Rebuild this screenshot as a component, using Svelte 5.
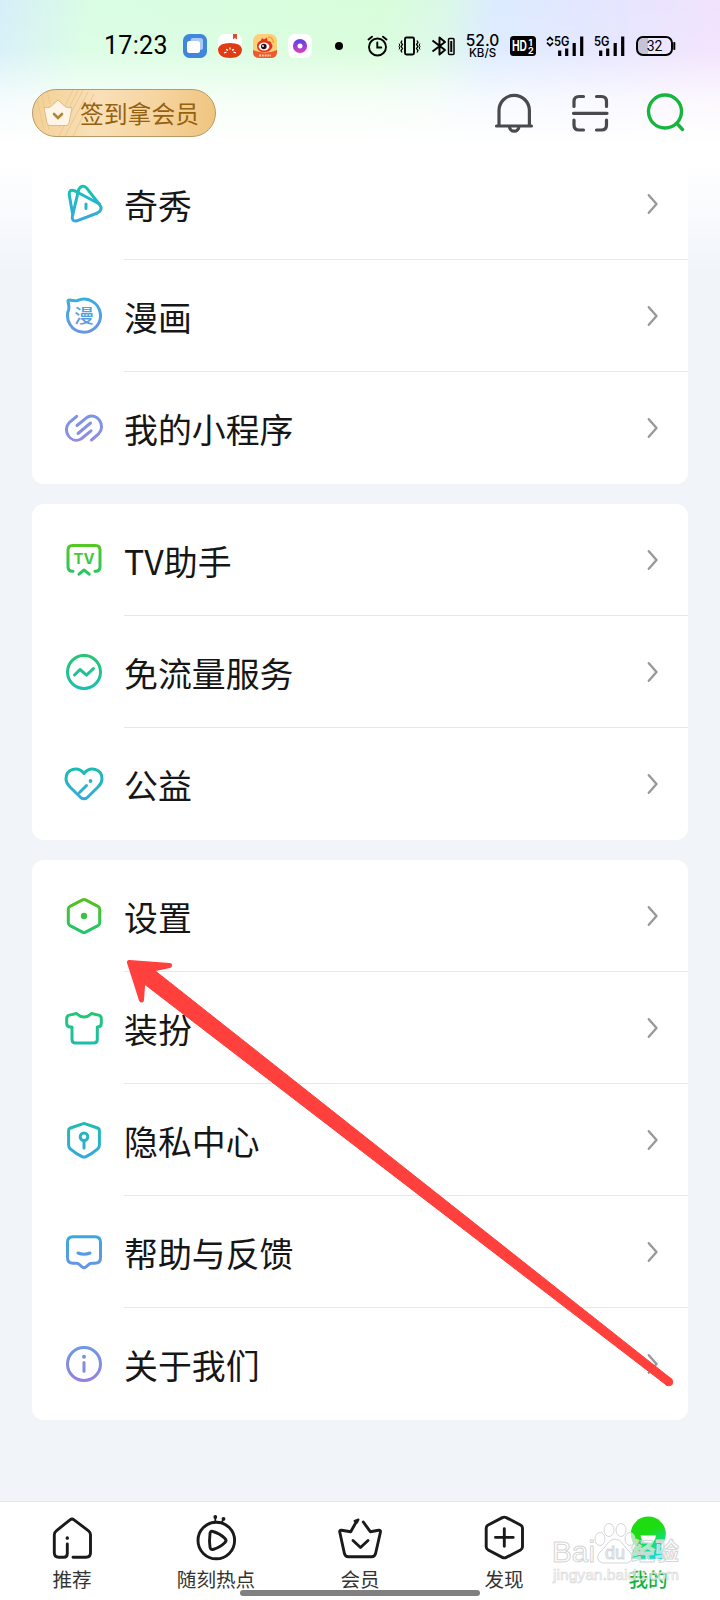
<script>
  const groups = [
    [
      { icon: 'show', label: '奇秀', from: '#14c3b2', to: '#3aa6e2' },
      { icon: 'comic', label: '漫画', from: '#38aede', to: '#6c93e6' },
      { icon: 'mini', label: '我的小程序', from: '#7496e6', to: '#978be0' }
    ],
    [
      { icon: 'tv', label: 'TV助手', from: '#58c81c', to: '#22c56c' },
      { icon: 'traffic', label: '免流量服务', from: '#26c670', to: '#1bbfb4' },
      { icon: 'heart', label: '公益', from: '#1bbdae', to: '#35a9e2' }
    ],
    [
      { icon: 'settings', label: '设置', from: '#58c01c', to: '#1fc670' },
      { icon: 'shirt', label: '装扮', from: '#26c66c', to: '#18bfae' },
      { icon: 'shield', label: '隐私中心', from: '#1ebcae', to: '#34a8e0' },
      { icon: 'help', label: '帮助与反馈', from: '#36a8e0', to: '#6c93e6' },
      { icon: 'about', label: '关于我们', from: '#6c98e4', to: '#9482e0' }
    ]
  ];

  const tabs = [
    { id: 'home', label: '推荐' },
    { id: 'hot', label: '随刻热点' },
    { id: 'vip', label: '会员' },
    { id: 'discover', label: '发现' },
    { id: 'mine', label: '我的' }
  ];

  let activeTab = $state('mine');
</script>

<div class="screen">
  <div class="status-bar">
    <span class="clock">17:23</span>
    <div class="app-icons">
      <svg width="24" height="24" viewBox="0 0 24 24">
        <rect width="24" height="24" rx="6.5" fill="#3f86dc" />
        <rect x="7.5" y="4" width="12.5" height="12" rx="2.5" fill="#a9cbf5" />
        <rect x="4" y="7" width="13" height="12" rx="2.5" fill="#fff" />
      </svg>
      <svg width="24" height="24" viewBox="0 0 24 24">
        <rect width="24" height="24" rx="6.5" fill="#fff" />
        <path d="M15 0h4v5.500l-2-1.500-2 1.500z" fill="#d9502f" />
        <path d="M0 15Q1 9 12 9t12 6q0 9-12 9T0 15z" fill="#df3c14" />
        <path d="M6 19l2.500-.8M8 15.300l2 1M12 13.500v2M16 15.300l-2 1M18 19l-2.500-.8" stroke="#fff" stroke-width="1.300" />
      </svg>
      <svg width="24" height="24" viewBox="0 0 24 24">
        <rect width="24" height="24" rx="6.500" fill="#fbd078" />
        <path d="M0 16q12 5 24 0v2q0 6-6.500 6h-11Q0 24 0 18z" fill="#ee5a2e" />
        <path d="M4 12q0-4 4-5.500l1-2.500 2 1.500 3-2 .5 3.500q4 0 4 3 2 2 0 4.500-2 3.500-7 3.500-7.500 0-7.500-6z" fill="#e2321c" />
        <ellipse cx="11" cy="12.500" rx="5.300" ry="4" fill="#fff" />
        <circle cx="10.800" cy="12.500" r="2.800" fill="#1a1212" />
        <circle cx="10" cy="12" r=".9" fill="#fff" />
        <path d="M15 3q5 0 5.500 6" fill="none" stroke="#f3a13a" stroke-width="1.400" />
        <path d="M6 21.500h12" stroke="#fbc9a0" stroke-width="2" stroke-dasharray="2 .8" />
      </svg>
      <svg width="24" height="24" viewBox="0 0 24 24">
        <defs>
          <linearGradient id="ring" x1="0" y1="0" x2="0" y2="1">
            <stop offset="0" stop-color="#6a3ee8" />
            <stop offset="1" stop-color="#c940c0" />
          </linearGradient>
        </defs>
        <rect width="24" height="24" rx="6.500" fill="#fff" />
        <circle cx="12" cy="12" r="4.800" fill="none" stroke="url(#ring)" stroke-width="4.600" />
      </svg>
    </div>
    <i class="more-dot"></i>
    <div class="signals">
      <svg width="21" height="22" viewBox="0 0 21 22" fill="none" stroke="#000" stroke-width="1.900" stroke-linecap="round">
        <circle cx="10.500" cy="12" r="8.500" />
        <path d="M10.300 7.500v5h4M1.500 4.500L5 1.700M19.500 4.500L16 1.700" />
      </svg>
      <svg width="23" height="22" viewBox="0 0 23 22" fill="none" stroke="#000" stroke-width="1.900">
        <rect x="7" y="2.500" width="9" height="17" rx="1.500" />
        <path d="M4 5.500L3 7.500l1.500 2L3 11.500l1.500 2L3 15.500l1 2M19 5.500l1 2-1.500 2 1.500 2-1.500 2 1.500 2-1 2" stroke-width="1.300" />
        <path d="M1 8.500l.8 1.500L1 11.500 1.800 13 1 14.500M22 8.500l-.8 1.500.8 1.500-.8 1.500.8 1.500" stroke-width="1" />
      </svg>
      <svg width="24" height="22" viewBox="0 0 24 22" fill="none" stroke="#000" stroke-width="2">
        <path d="M1.500 5.500L14 15l-5.500 4.500v-17L14 7 1.500 16.500" stroke-linejoin="round" />
        <rect x="17.500" y="3.500" width="5.500" height="16" rx="1" stroke-width="1.500" />
        <path d="M20.250 6v11" stroke-width="2" />
      </svg>
      <div class="speed"><span>52.0</span><small>KB/S</small></div>
      <svg width="26" height="20" viewBox="0 0 26 20">
        <rect width="26" height="20" rx="3.500" />
        <text x="2" y="15" class="hd" textLength="15" lengthAdjust="spacingAndGlyphs">HD</text>
        <text x="18.500" y="9.800" class="hd-num">1</text>
        <text x="18" y="18" class="hd-num">2</text>
      </svg>
      <svg width="38" height="28" viewBox="0 -3 38 28">
        <path d="M1 5.300L4 2.400 7 5.300M1 7.700L4 10.600 7 7.700" fill="none" stroke="#000" stroke-width="1.800" />
        <text x="8" y="10.800" class="net" textLength="15.500" lengthAdjust="spacingAndGlyphs">5G</text>
        <path d="M13.700 15.500V21M20.700 13.500V21M28.200 8V21M35.700 1.500V21" stroke="#000" stroke-width="3.200" />
      </svg>
      <svg width="31" height="28" viewBox="0 -3 31 28">
        <text x="0" y="10.800" class="net" textLength="15.500" lengthAdjust="spacingAndGlyphs">5G</text>
        <path d="M6.700 15.500V21M13.700 13.500V21M21.200 8V21M28.700 1.500V21" stroke="#000" stroke-width="3.200" />
      </svg>
      <svg width="41" height="22" viewBox="0 0 41 22">
        <path d="M8 2h5v18H8q-6 0-6-6V8q0-6 6-6z" fill="#c5c3d6" />
        <rect x="2" y="2" width="35" height="18" rx="6" fill="none" stroke="#000" stroke-width="2" />
        <rect x="38.300" y="7" width="2" height="8" rx=".8" />
        <text x="19.500" y="16" class="battery" text-anchor="middle">32</text>
      </svg>
    </div>
  </div>

  <header class="top-bar">
    <button class="check-in">
      <svg class="rays" width="80" height="46" viewBox="0 0 80 46" fill="none" stroke="#ecc88e" stroke-width="1">
        <path d="M3 4l8 36M8 0l8 40M14 0l3 14M40 0L28 24M45 0L26 38M50 0L26 46M55 2L32 46M61 4L40 46" />
      </svg>
      <svg class="crown" width="30" height="28" viewBox="0 0 30 28">
        <path d="M1 8.500q6 1 8.500-2.500Q12 4 15 1q3 3 5.500 5Q23 9.500 29 8.500l-3 15.500q-.4 2.500-3 2.500H7q-2.600 0-3-2.500z" fill="#fdf5e8" stroke="#dfbd85" stroke-width="1" />
        <path d="M11 15l4 4 4-4" fill="none" stroke="#b38435" stroke-width="2.600" stroke-linecap="round" />
      </svg>
      <span>签到拿会员</span>
    </button>
    <div class="actions">
      <svg width="40" height="40" viewBox="0 0 40 40" fill="none" stroke="#4a4a4c" stroke-width="3.200" stroke-linecap="round">
        <path d="M5 32V17.500a15.200 15.200 0 0 1 30.400 0V32M2.500 33h35" />
        <path d="M15.500 33.500a4.700 4.700 0 0 0 9.400 0" />
      </svg>
      <svg width="40" height="40" viewBox="0 0 40 40" fill="none" stroke="#4a4a4c" stroke-width="3.200" stroke-linecap="round">
        <path d="M4 13.500V8.500q0-5 5-5h4.500M26.500 3.500h5q5 0 5 5v5M4 27v5q0 5 5 5h4.500M26.500 37h5q5 0 5-5v-5M3.500 20.300h33.500" />
      </svg>
      <svg width="40" height="40" viewBox="0 0 40 40" fill="none" stroke="#16b53e" stroke-width="3.400" stroke-linecap="round">
        <circle cx="19" cy="18.500" r="16.500" />
        <path d="M31 30.500l5.500 6" />
      </svg>
    </div>
  </header>

  <main>
    {#each groups as group}
      <section class="card">
        {#each group as item}
          <div class="row">
            <svg class="row-icon" width="40" height="40" viewBox="0 0 40 40" style:--tint="url(#g-{item.icon})">
              <defs>
                <linearGradient id="g-{item.icon}" gradientUnits="userSpaceOnUse" x1="0" y1="2" x2="0" y2="38">
                  <stop offset="0" stop-color={item.from} />
                  <stop offset="1" stop-color={item.to} />
                </linearGradient>
              </defs>
              {#if item.icon === 'show'}
                <path d="M14.800 5.200L8.300 32.500Q7.600 37.800 12.800 36.800L33.500 29Q39.500 25.500 35.500 20.500L22.500 3.800Q18 .2 14.800 5.200z" />
                <path d="M8.800 31L5.200 10.500Q5 4.500 11 7L35.500 20M22 20v4.500" />
              {:else if item.icon === 'comic'}
                <path d="M13.500 4.500A16.500 16.500 0 1 1 4.500 14Q5.500 11 4 5.500 3.800 4 5.500 4q4.500 1 8 .5z" />
                <text x="10.300" y="27" class="comic">漫</text>
              {:else if item.icon === 'mini'}
                <path d="M12.700 8.300L5.500 14.300C-2.500 22.500 6.500 36.500 17 31L27 22.800M27.500 32l7-6C42.500 18 33.500 4 23 9.300L13 17.500" />
                <path d="M14 25.500L26.500 15" />
              {:else if item.icon === 'tv'}
                <path d="M9 31.200H8.500q-4.500 0-4.500-4.500V10q0-4.500 4.500-4.500h23q4.500 0 4.500 4.500v16.700q0 4.500-4.500 4.500H31M15 34.200l5-4.200 5.200 4.200" />
                <text x="9.500" y="24" class="tv" textLength="21" lengthAdjust="spacingAndGlyphs">TV</text>
              {:else if item.icon === 'traffic'}
                <circle cx="20" cy="20" r="16.500" />
                <path d="M10.500 23l5.500-5.500 6.500 5.700 7-6.700" />
              {:else if item.icon === 'heart'}
                <path d="M20 9.500C14 2 2 4.500 2 15q0 4 4 8l10.500 10.300q3.500 3 7 0L34 23q4-4 4-8C38 4.500 26 2 20 9.500zM15.500 28.500l7-7" />
                <circle class="solid" cx="26.500" cy="17" r="1.900" />
              {:else if item.icon === 'settings'}
                <path d="M18.500 3.900L6 10.300q-1.700.9-1.700 2.700v14q0 1.800 1.700 2.700l12.500 6.400q1.500.8 3 0L34 29.700q1.700-.9 1.700-2.700V13q0-1.800-1.700-2.700L21.500 3.900q-1.500-.8-3 0z" />
                <circle class="solid" cx="20" cy="20" r="3.200" />
              {:else if item.icon === 'shirt'}
                <path d="M12.500 5.500Q20 12.500 27.500 5.500l7 1.600q2.800.6 2.800 3.400v5q0 3.500-4 3.500v12.500q0 3.500-3.500 3.500H11.500Q8 35 8 31.500V19H6.500Q2.700 19 2.700 15.500v-5q0-2.800 2.800-3.400z" />
              {:else if item.icon === 'shield'}
                <path d="M18.600 3.800Q20 3.200 21.400 3.800L33.500 8q1.900.7 1.900 2.700V25q0 2.700-2 4.200Q28 34 21.500 36.800q-1.500.6-3 0Q12 34 6.600 29.200q-2-1.500-2-4.200V10.700q0-2 1.900-2.700z" />
                <circle cx="20" cy="16.700" r="3.800" />
                <path d="M20 20.500v7.500" />
              {:else if item.icon === 'help'}
                <path d="M9 4.800h22q5.500 0 5.500 5.500v15.500q0 5.500-5.500 5.500h-3.500q-1.700 0-3 1.300l-2.500 2.200q-2 1.600-4 0l-2.500-2.200q-1.300-1.300-3-1.300H9q-5.500 0-5.500-5.500V10.300Q3.500 4.800 9 4.800zM14 21q6 2.500 12 0" />
              {:else}
                <circle cx="20" cy="20" r="16.500" />
                <path d="M20 18.500v8.800" />
                <circle class="solid" cx="20" cy="12.800" r="2" />
              {/if}
            </svg>
            <div class="row-body">
              <span class="row-label">{item.label}</span>
              <svg class="chevron" width="12" height="22" viewBox="0 0 12 22">
                <path d="M1.800 2.200l7.700 8.800-7.700 8.800" />
              </svg>
            </div>
          </div>
        {/each}
      </section>
    {/each}
  </main>

  <nav class="tab-bar">
    {#each tabs as tab}
      <button class="tab" class:active={tab.id === activeTab} onclick={() => (activeTab = tab.id)}>
        <svg class="tab-icon" width="48" height="48" viewBox="0 0 48 48">
          {#if tab.id === 'home'}
            <path d="M19.300 30v9.500q0 3.800-3.500 3.800h-5q-4.500 0-4.500-4.500v-18q0-2.500 2-4L22 5.800q2-1.500 4 0l14.500 11q2 1.500 2 4v18q0 4.500-4.500 4.500H25" />
            <path d="M19.300 24v.2" stroke-width="3.300" />
          {:else if tab.id === 'hot'}
            <circle cx="24.300" cy="26.500" r="18.300" />
            <path d="M18 20q0-3.500 3-2.500Q28 19.500 33 24.500q2 2 0 4-5 5-12 7-2.500.5-3-2.500-1-6 0-13z" />
            <path class="antenna" d="M23.300 3v5M31.500 4.800l-2 4" />
            <path class="antenna-tip" d="M23.300 3v.1M31.500 4.800v.1" />
          {:else if tab.id === 'vip'}
            <path d="M20.500 7.500L14.700 17.700 5.500 16.200q-2.200-.2-1.700 2L8.300 39q.7 3.800 4.200 3.800h23q3.500 0 4.200-3.800l4.700-20.800q.5-2.200-1.700-2l-8.400 1.500L27.300 8" />
            <path d="M18.500 7l4-1.500-1.500 3z" stroke-width="2" />
            <path d="M17 26.500l7.500 7 7.500-7" />
          {:else if tab.id === 'discover'}
            <path d="M22.300 3.600L8.200 11Q6.200 12 6.200 14.200v18.500q0 2.200 2 3.300l14.100 7.400q2 1 4 0L40.500 36q2-1.100 2-3.300V14.200q0-2.200-2-3.200L26.300 3.600q-2-1-4 0zM15.500 23.400h17.700M24.300 14.700v17.500" />
          {:else}
            <defs>
              <linearGradient id="mine" gradientUnits="userSpaceOnUse" x1="18" y1="8" x2="36" y2="42">
                <stop offset=".3" stop-color="#1fdc12" />
                <stop offset="1" stop-color="#06dfe0" />
              </linearGradient>
            </defs>
            <circle class="face" cx="24.300" cy="20" r="17.500" />
            <path class="face" d="M10 33h28l3 12H6.700z" />
            <path class="cut" d="M16.500 21.500h15.500q-1 7.500-7.700 7.500t-7.800-7.500z" />
          {/if}
        </svg>
        <span>{tab.label}</span>
      </button>
    {/each}
  </nav>
  <div class="home-indicator"></div>

  <svg class="watermark" width="132" height="66" viewBox="0 0 132 66">
    <text x="1" y="42" class="wm-name" textLength="43" lengthAdjust="spacingAndGlyphs">Bai</text>
    <g class="paw">
      <ellipse cx="49" cy="19" rx="5" ry="6.500" />
      <ellipse cx="58" cy="10" rx="5" ry="6.500" />
      <ellipse cx="70" cy="10" rx="5" ry="6.500" />
      <ellipse cx="79" cy="19" rx="5" ry="6.500" />
      <path d="M64 19q-5 0-8 5t-7 8q-4 5-1 9 3 3 8 2h16q5 1 8-2 3-4-1-9-4-3-7-8t-8-5z" />
    </g>
    <text x="54" y="39" class="wm-du">du</text>
    <text x="80" y="40" class="wm-cn" textLength="48" lengthAdjust="spacingAndGlyphs">经验</text>
    <text x="2" y="60" class="wm-url" textLength="126" lengthAdjust="spacingAndGlyphs">jingyan.baidu.com</text>
  </svg>

  <svg class="pointer" width="552" height="434" viewBox="124 956 552 434">
    <path class="pointer-head" d="M129.500 962.500L169.500 965.500 148 970 150 976 143 979 141.500 1000z" />
    <path d="M144 966L156 971.500 671.500 1379 667 1385.500 143 983z" />
    <circle cx="669" cy="1382" r="3.800" />
  </svg>
</div>

<style>
  :global(body) {
    background: #f1f5fa;
  }

  .screen {
    position: relative;
    display: flex;
    flex-direction: column;
    width: 720px;
    height: 1600px;
    overflow: hidden;
    box-sizing: border-box;
    font-family: 'Noto Sans CJK SC', sans-serif;
    color: #161616;
    background:
      linear-gradient(180deg, rgba(255, 255, 255, 0) 0, rgba(255, 255, 255, 0.08) 50px, rgba(255, 255, 255, 0.75) 100px, #fff 145px, #fff 160px, #f1f5fa 275px, #f1f5fa 100%),
      linear-gradient(100deg, #d6eefa 0, #dafde4 90px, #d8fddb 380px, #dbf8e8 440px, #dcebff 490px, #e7e5ff 620px, #f7e1fb 760px);
  }

  button {
    padding: 0;
    border: 0;
    background: none;
    font-family: inherit;
    color: inherit;
  }

  svg {
    display: block;
    flex-shrink: 0;
  }

  .status-bar {
    display: flex;
    align-items: center;
    height: 89px;
    padding: 3px 44px 0 104px;
    box-sizing: border-box;
  }

  .clock {
    width: 79px;
    font-family: Roboto, sans-serif;
    font-size: 25px;
    line-height: 30px;
    letter-spacing: 0.3px;
    color: #000;
  }

  .app-icons {
    display: flex;
    gap: 11px;
  }

  .more-dot {
    width: 8px;
    height: 8px;
    margin: 0 24px 0 23px;
    border-radius: 50%;
    background: #000;
  }

  .signals {
    display: flex;
    align-items: center;
    gap: 10px;
  }

  .speed {
    display: flex;
    flex-direction: column;
    align-items: center;
    width: 35px;
    font: 500 15.5px/13px Inter, sans-serif;
    color: #000;
  }

  .speed small {
    font-size: 11.5px;
    line-height: 12px;
  }

  .hd {
    font: 700 14px Inter, sans-serif;
    fill: #fff;
  }

  .hd-num {
    font: 700 9px Inter, sans-serif;
    fill: #fff;
  }

  .net {
    font: 600 13px Inter, sans-serif;
  }

  .battery {
    font: 400 14px Roboto, sans-serif;
  }

  .top-bar {
    display: flex;
    justify-content: space-between;
    align-items: center;
    height: 48px;
    padding: 0 34px 0 32px;
  }

  .check-in {
    position: relative;
    display: flex;
    align-items: center;
    width: 184px;
    height: 48px;
    padding-left: 10px;
    box-sizing: border-box;
    overflow: hidden;
    border: 1px solid #b99a66;
    border-radius: 24px;
    background: linear-gradient(100deg, #f3cf94 0, #f9e0b8 35%, #f6d5a0 65%, #efc47e 100%);
    color: #95620f;
  }

  .check-in span {
    position: relative;
    margin-left: 7px;
    font-size: 23.8px;
    line-height: 46px;
    white-space: nowrap;
  }

  .rays {
    position: absolute;
    left: 0;
    top: 0;
  }

  .crown {
    position: relative;
  }

  .actions {
    display: flex;
    gap: 36px;
  }

  main {
    display: flex;
    flex: 1;
    flex-direction: column;
    gap: 20px;
    padding: 11px 32px 0;
  }

  .card {
    border-radius: 12px;
    background: #fff;
  }

  .card:first-child {
    border-radius: 0 0 12px 12px;
  }

  .row {
    display: flex;
    align-items: center;
    height: 112px;
    padding-left: 32px;
  }

  .row-icon {
    margin-right: 20px;
    fill: none;
    stroke: var(--tint);
    stroke-width: 3;
    stroke-linecap: round;
    stroke-linejoin: round;
  }

  .row-icon .solid,
  .row-icon text {
    fill: var(--tint);
    stroke: none;
  }

  .comic {
    font: 500 19.5px 'Noto Sans CJK SC', sans-serif;
  }

  .tv {
    font: 700 14px Inter, sans-serif;
  }

  .row-body {
    display: flex;
    flex: 1;
    align-items: center;
    justify-content: space-between;
    height: 112px;
    padding-right: 29px;
    box-sizing: border-box;
    border-bottom: 1px solid #e6e7e9;
  }

  .row:last-child .row-body {
    border-bottom-color: transparent;
  }

  .row-label {
    padding-top: 2px;
    font-size: 33.9px;
    font-weight: 400;
    line-height: 48px;
  }

  .chevron {
    fill: none;
    stroke: #98999b;
    stroke-width: 2.4;
    stroke-linecap: round;
    stroke-linejoin: round;
  }

  .tab-bar {
    display: grid;
    grid-template-columns: repeat(5, 1fr);
    height: 99px;
    box-sizing: border-box;
    border-top: 1px solid #e2e5ea;
    background: #fff;
  }

  .tab {
    display: flex;
    flex-direction: column;
    align-items: center;
    padding-top: 12px;
    font-size: 19.6px;
    font-weight: 400;
    line-height: 28px;
    color: #333;
  }

  .tab span {
    margin-top: 3px;
  }

  .tab.active {
    font-weight: 500;
    color: #16b33c;
  }

  .tab-icon {
    fill: none;
    stroke: #1a1a1a;
    stroke-width: 2.9;
    stroke-linecap: round;
    stroke-linejoin: round;
  }

  .antenna {
    stroke-width: 1.8;
  }

  .antenna-tip {
    stroke-width: 3.8;
  }

  .tab-icon .face {
    fill: url(#mine);
    stroke: none;
  }

  .tab-icon .cut {
    fill: #fff;
    stroke: none;
  }

  .home-indicator {
    position: absolute;
    left: 240px;
    bottom: 4px;
    width: 240px;
    height: 6px;
    border-radius: 3px;
    background: #808080;
  }

  .watermark {
    position: absolute;
    right: 37px;
    bottom: 14px;
    fill: rgba(255, 255, 255, 0.6);
    stroke: #d6d6d6;
    stroke-width: 1;
    pointer-events: none;
  }

  .wm-name {
    font: 400 29px 'Liberation Sans', sans-serif;
  }

  .wm-du {
    font: 400 18px 'Liberation Sans', sans-serif;
  }

  .wm-cn {
    font: 700 24px 'Noto Sans CJK SC', sans-serif;
  }

  .wm-url {
    font: 400 15px 'Liberation Sans', sans-serif;
    stroke-width: 0.6;
  }

  .pointer {
    position: absolute;
    left: 124px;
    top: 956px;
    fill: #ff403c;
    stroke: #ff403c;
    stroke-width: 1;
    stroke-linejoin: round;
    pointer-events: none;
  }

  .pointer-head {
    stroke-width: 5;
  }
</style>
